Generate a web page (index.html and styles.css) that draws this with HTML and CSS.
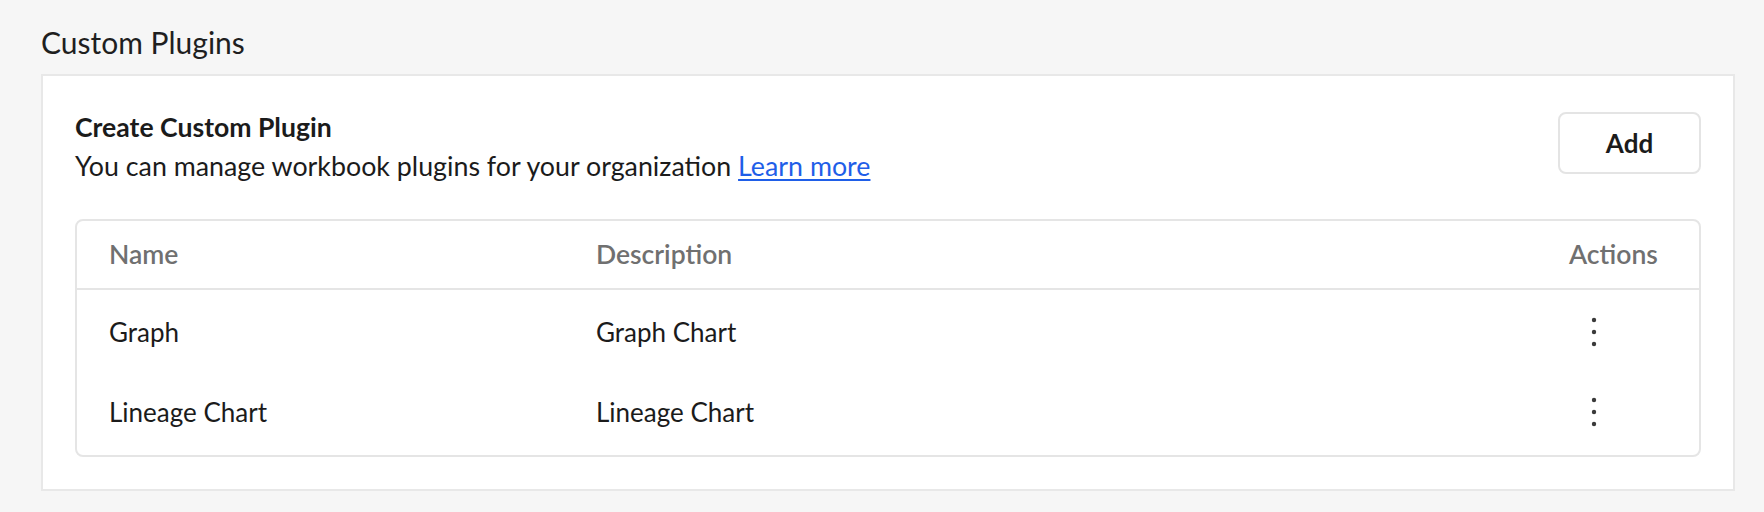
FILE: index.html
```html
<!DOCTYPE html>
<html lang="en">
<head>
<meta charset="utf-8">
<title>Custom Plugins</title>
<link rel="stylesheet" href="styles.css">
</head>
<body>
<main class="page">
  <h1 class="page-title">Custom Plugins</h1>
  <section class="card">
    <div class="card-head">
      <div class="card-intro">
        <h2 class="card-title">Create Custom Plugin</h2>
        <p class="card-desc">You can manage workbook plugins for your organization <a class="link" href="#">Learn more</a></p>
      </div>
      <button class="btn" type="button">Add</button>
    </div>
    <div class="table">
      <div class="row head">
        <div class="cell">Name</div>
        <div class="cell">Description</div>
        <div class="cell">Actions</div>
      </div>
      <div class="tbody">
        <div class="row">
          <div class="cell">Graph</div>
          <div class="cell">Graph Chart</div>
          <div class="cell"><span class="kebab" aria-label="More actions"><svg width="8" height="32" viewBox="0 0 8 32"><circle cx="4" cy="4" r="2.2"/><circle cx="4" cy="16" r="2.2"/><circle cx="4" cy="28" r="2.2"/></svg></span></div>
        </div>
        <div class="row">
          <div class="cell">Lineage Chart</div>
          <div class="cell">Lineage Chart</div>
          <div class="cell"><span class="kebab" aria-label="More actions"><svg width="8" height="32" viewBox="0 0 8 32"><circle cx="4" cy="4" r="2.2"/><circle cx="4" cy="16" r="2.2"/><circle cx="4" cy="28" r="2.2"/></svg></span></div>
        </div>
      </div>
    </div>
  </section>
</main>
</body>
</html>
```
FILE: styles.css
```css
html, body {
  margin: 0;
  padding: 0;
  background: #f6f6f6;
}
body {
  font-family: Lato, "Noto Sans", sans-serif;
  color: #1b1b1b;
}
.page {
  padding: 24px 29px 16px 41px;
}
.page-title {
  margin: 0 0 14px 0;
  font-size: 30px;
  line-height: 36px;
  font-weight: 400;
  color: #1f1f1f;
}
.card {
  background: #ffffff;
  border: 2px solid #e8e8e8;
  padding: 32px;
}
.card-head {
  display: flex;
  justify-content: space-between;
  align-items: flex-start;
}
.card-title {
  margin: 0;
  font-size: 26.6px;
  line-height: 38px;
  font-weight: 700;
}
.card-desc {
  margin: 0;
  font-size: 26.8px;
  line-height: 40px;
}
.link {
  color: #1f5ee8;
  text-decoration: underline;
  text-decoration-thickness: 2px;
  text-underline-offset: 3px;
}
.btn {
  margin-top: 4px;
  width: 143px;
  height: 62px;
  background: #fff;
  border: 2px solid #e4e4e4;
  border-radius: 8px;
  font-family: inherit;
  font-size: 26px;
  font-weight: 700;
  color: #1b1b1b;
  padding: 0;
}
.table {
  margin-top: 33px;
  border: 2px solid #e5e5e5;
  border-radius: 8px;
}
.row {
  display: grid;
  grid-template-columns: 487px 1fr 162px;
  align-items: center;
  height: 80px;
}
.row.head {
  height: 66px;
  padding-bottom: 1px;
  border-bottom: 2px solid #e5e5e5;
  font-weight: 600;
  color: #707070;
  font-size: 26.5px;
}
.tbody {
  padding: 2px 0 3px;
  font-size: 26px;
}
.cell {
  padding-left: 32px;
}
.kebab {
  display: flex;
  width: 50px;
  justify-content: center;
  align-items: center;
  fill: #3a3a3a;
}
```
